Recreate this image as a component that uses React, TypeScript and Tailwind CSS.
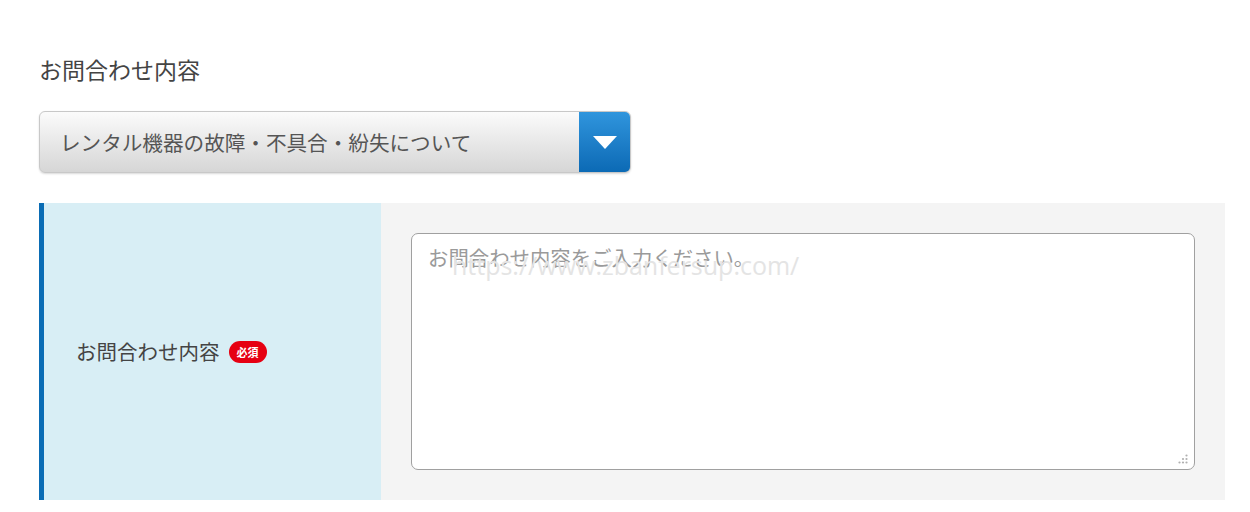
const font = "font-['Noto_Sans_CJK_JP','Noto_Sans',sans-serif]";

const App = () => {
    return (
        <div className={`w-[1250px] h-[512px] bg-white ${font} overflow-hidden`}>
            <div className="pl-[39px] pt-[52px] w-[1225px]">
                <h2 className="text-[23px] leading-[34px] text-[#444]">お問合わせ内容</h2>

                {/* select box */}
                <div className="mt-[25px] w-[592px] h-[62px] flex rounded-[6px] border border-[#c8c8c8] overflow-hidden bg-gradient-to-b from-[#fbfbfb] to-[#d6d6d6] shadow-[0_1px_2px_rgba(0,0,0,0.15)]">
                    <div className="flex-1 flex items-center pl-[20px] text-[20.6px] text-[#555]">
                        レンタル機器の故障・不具合・紛失について
                    </div>
                    <div className="w-[51px] h-full grid place-items-center bg-gradient-to-b from-[#2f95dd] to-[#0b6ab5]">
                        <svg width="24" height="13" viewBox="0 0 24 13">
                            <polygon points="0,0 24,0 12,13" fill="#fff" />
                        </svg>
                    </div>
                </div>

                {/* form row */}
                <div className="mt-[30px] h-[297px] flex">
                    <div className="w-[342px] h-full bg-[#d8eef5] border-l-[5px] border-[#0a6cb4] flex items-center pl-[32px]">
                        <span className="text-[20.5px] text-[#444]">お問合わせ内容</span>
                        <span className="ml-[9px] h-[22px] w-[38px] text-center rounded-full bg-[#e60012] text-white text-[11px] leading-[22px] font-bold">必須</span>
                    </div>
                    <div className="flex-1 h-full bg-[#f4f4f4] p-[30px]">
                        <div className="relative w-full h-full rounded-[7px] border border-[#a0a0a0] bg-white">
                            <textarea
                                className="w-full h-full resize-none outline-none bg-transparent px-[16px] py-[8px] text-[20.4px] text-[#333] placeholder:text-[#9a9a9a]"
                                placeholder="お問合わせ内容をご入力ください。"
                            />
                            <span className="absolute left-[40px] top-[13px] text-[25px] text-[#e4e4e4] font-['Open_Sans',sans-serif] pointer-events-none select-none">
                                https://www.zbanfersup.com/
                            </span>
                            <svg className="absolute right-[5px] bottom-[4px]" width="12" height="12" viewBox="0 0 12 12">
                                <circle cx="9.5" cy="2.5" r="1.1" fill="#b0b0b0" />
                                <circle cx="6" cy="6" r="1.1" fill="#b0b0b0" />
                                <circle cx="9.5" cy="6" r="1.1" fill="#b0b0b0" />
                                <circle cx="2.5" cy="9.5" r="1.1" fill="#b0b0b0" />
                                <circle cx="6" cy="9.5" r="1.1" fill="#b0b0b0" />
                                <circle cx="9.5" cy="9.5" r="1.1" fill="#b0b0b0" />
                            </svg>
                        </div>
                    </div>
                </div>
            </div>
        </div>
    );
};

export default App;
